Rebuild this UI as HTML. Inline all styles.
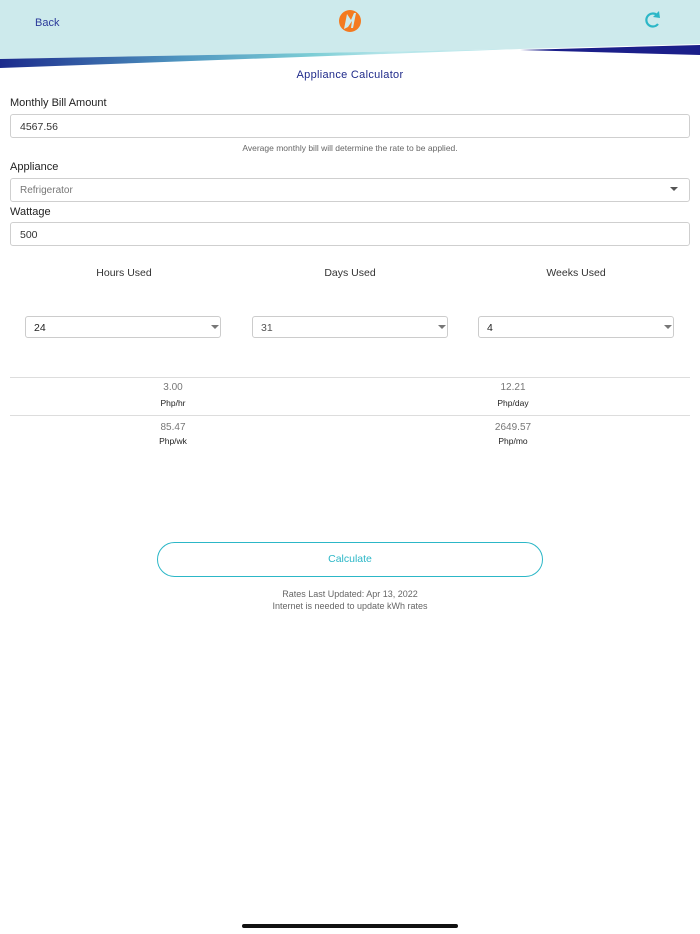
<!DOCTYPE html>
<html><head><meta charset="utf-8"><style>
*{box-sizing:border-box;margin:0;padding:0}
body{width:700px;height:934px;background:#fff;font-family:"Liberation Sans",sans-serif;position:relative;overflow:hidden;color:#333}
.a{position:absolute}
.lbl{font-size:11px;color:#222}
.inp{position:absolute;left:10px;width:680px;height:24px;border:1px solid #cfcfcf;border-radius:3px;font-size:10.5px;padding-left:9px;line-height:24px;color:#333}
.sel{position:absolute;width:196px;height:22px;border:1px solid #ccc;border-radius:3px;font-size:10.5px;padding-left:8px;line-height:22px;color:#222}
.tri{position:absolute;width:0;height:0;border-left:4px solid transparent;border-right:4px solid transparent;border-top:4px solid #777}
.c{position:absolute;text-align:center;font-size:10px;width:200px}
</style></head><body>
<svg class="a" style="left:0;top:0" width="700" height="70">
<defs><linearGradient id="g" x1="0" x2="1"><stop offset="0" stop-color="#1b2a8c"/><stop offset="0.35" stop-color="#4f96c0"/><stop offset="0.6" stop-color="#7ccdd5"/><stop offset="0.75" stop-color="#b8e6ea"/></linearGradient></defs>
<polygon points="0,0 700,0 700,44 520,49 0,59" fill="#cdeaec"/>
<polygon points="0,59 520,49 0,68" fill="url(#g)"/>
<polygon points="520,50 700,45 700,55" fill="#1b1f8a"/>
<circle cx="350" cy="21" r="11" fill="#f47a1f"/>
<path d="M344,29 L347,14 L351,20 L354,13 L356,13 L353,28 L351,28 L352,21 L348,27 Z" fill="#cdeaec"/>
<path d="M657,15 A6.5,6.5 0 1 0 658,24" stroke="#2cb7c7" stroke-width="2.2" fill="none"/>
<polygon points="659,11 660,18 653,17" fill="#2cb7c7"/>
</svg>
<div class="a" style="left:35px;top:17px;font-size:11px;color:#2b3a9a">Back</div>
<div class="a" style="left:0;width:700px;top:69px;text-align:center;font-size:11px;color:#1f2a8a;letter-spacing:.3px">Appliance Calculator</div>
<div class="a lbl" style="left:10px;top:97px">Monthly Bill Amount</div>
<div class="inp" style="top:114px">4567.56</div>
<div class="a" style="left:0;width:700px;top:143px;text-align:center;font-size:8.5px;color:#666">Average monthly bill will determine the rate to be applied.</div>
<div class="a lbl" style="left:10px;top:161px">Appliance</div>
<div class="inp" style="top:178px;color:#777;font-size:10px">Refrigerator</div>
<div class="tri" style="left:670px;top:187px;border-top-color:#555"></div>
<div class="a lbl" style="left:10px;top:206px">Wattage</div>
<div class="inp" style="top:222px">500</div>
<div class="c" style="left:24px;top:267px;font-size:10.5px">Hours Used</div>
<div class="c" style="left:250px;top:267px;font-size:10.5px">Days Used</div>
<div class="c" style="left:476px;top:267px;font-size:10.5px">Weeks Used</div>
<div class="sel" style="left:25px;top:316px">24</div><div class="tri" style="left:211px;top:325px"></div>
<div class="sel" style="left:252px;top:316px;color:#555">31</div><div class="tri" style="left:438px;top:325px"></div>
<div class="sel" style="left:478px;top:316px">4</div><div class="tri" style="left:664px;top:325px"></div>
<div class="a" style="left:10px;width:680px;top:377px;border-top:1px solid #ddd"></div>
<div class="a" style="left:10px;width:680px;top:415px;border-top:1px solid #ddd"></div>
<div class="c" style="left:73px;top:382px;color:#777">3.00</div>
<div class="c" style="left:73px;top:398px;font-size:8.5px;color:#222">Php/hr</div>
<div class="c" style="left:413px;top:382px;color:#777">12.21</div>
<div class="c" style="left:413px;top:398px;font-size:8.5px;color:#222">Php/day</div>
<div class="c" style="left:73px;top:422px;color:#777">85.47</div>
<div class="c" style="left:73px;top:436px;font-size:8.5px;color:#222">Php/wk</div>
<div class="c" style="left:413px;top:422px;color:#777">2649.57</div>
<div class="c" style="left:413px;top:436px;font-size:8.5px;color:#222">Php/mo</div>
<div class="a" style="left:157px;top:542px;width:386px;height:35px;border:1px solid #2cb7c7;border-radius:18px;text-align:center;line-height:33px;font-size:10.5px;color:#2cb7c7">Calculate</div>
<div class="a" style="left:0;width:700px;top:588px;text-align:center;font-size:9px;color:#666;line-height:12px">Rates Last Updated: Apr 13, 2022<br>Internet is needed to update kWh rates</div>
<div class="a" style="left:242px;top:924px;width:216px;height:4px;border-radius:2px;background:#111"></div>
</body></html>
